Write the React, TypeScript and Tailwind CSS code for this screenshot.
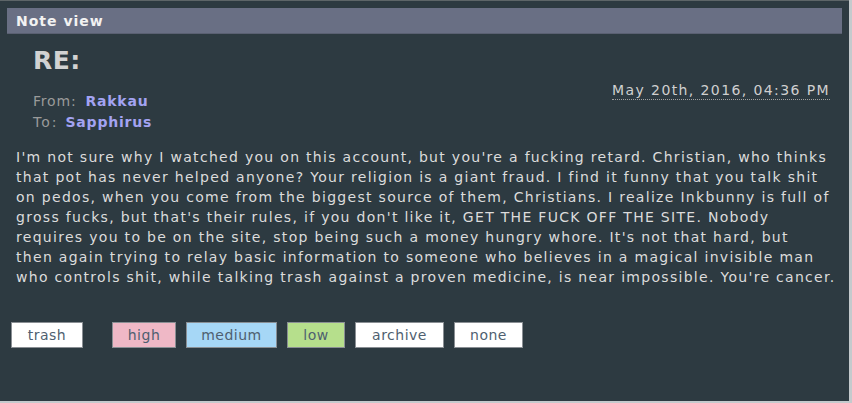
const lines = [
  "I'm not sure why I watched you on this account, but you're a fucking retard. Christian, who thinks",
  'that pot has never helped anyone? Your religion is a giant fraud. I find it funny that you talk shit',
  'on pedos, when you come from the biggest source of them, Christians. I realize Inkbunny is full of',
  "gross fucks, but that's their rules, if you don't like it, GET THE FUCK OFF THE SITE. Nobody",
  "requires you to be on the site, stop being such a money hungry whore. It's not that hard, but",
  'then again trying to relay basic information to someone who believes in a magical invisible man',
  "who controls shit, while talking trash against a proven medicine, is near impossible. You're cancer.",
]

const buttons = [
  { label: 'trash', cls: 'w-[72px] bg-white mr-[19px]' },
  { label: 'high', cls: 'w-[64px] bg-[#efb8c6]' },
  { label: 'medium', cls: 'w-[91px] bg-[#a6d7f6]' },
  { label: 'low', cls: 'w-[58px] bg-[#b6df8c]' },
  { label: 'archive', cls: 'w-[89px] bg-white' },
  { label: 'none', cls: 'w-[69px] bg-white' },
]

export default function App() {
  return (
    <div className="w-[852px] h-[403px] bg-[#c4cacd] font-['DejaVu_Sans',Verdana,sans-serif]">
      <div className="w-[849px] h-[401px] bg-[#2d3a41] border-t border-[#5d6568] pt-[7px] px-[7px]">
        <div className="h-[26px] bg-[#696f84] border-b border-[#5a6072] pl-[9px] text-[14px] font-bold leading-[26px] tracking-[1px] text-[#f2f2f2]">
          Note view
        </div>
        <div className="flex justify-between pl-[26px] pr-[12px]">
          <div>
            <div className="mt-[12px] text-[25px] font-bold leading-[30px] tracking-[0.5px] text-[#d2d2d2]">RE:</div>
            <div className="mt-[15px] text-[14px] leading-[21px] tracking-[0.8px]">
              <div>
                <span className="text-[#9a9a9a]">From:</span>
                <span className="ml-[9px] font-bold text-[#a3a3f2]">Rakkau</span>
              </div>
              <div>
                <span className="text-[#9a9a9a] tracking-[2px]">To:</span>
                <span className="ml-[7px] font-bold text-[#a3a3f2]">Sapphirus</span>
              </div>
            </div>
          </div>
          <div className="mt-[47px] self-start text-[14px] leading-[18px] tracking-[1.4px] text-[#d0d0d0] border-b border-dotted border-[#a0a0a0]">
            May 20th, 2016, 04:36 PM
          </div>
        </div>
        <div className="mt-[14px] pl-[9px] text-[14px] leading-[20px] tracking-[1.3px] text-[#dcdcdc]">
          {lines.map((l) => (
            <div key={l} className="whitespace-nowrap">
              {l}
            </div>
          ))}
        </div>
        <div className="mt-[35px] flex gap-[10px] pl-[4px]">
          {buttons.map((b) => (
            <div
              key={b.label}
              className={`${b.cls} h-[26px] border border-[#8a8f94] text-center text-[14px] leading-[24px] tracking-[0.5px] text-[#4f5f70]`}
            >
              {b.label}
            </div>
          ))}
        </div>
      </div>
    </div>
  )
}
